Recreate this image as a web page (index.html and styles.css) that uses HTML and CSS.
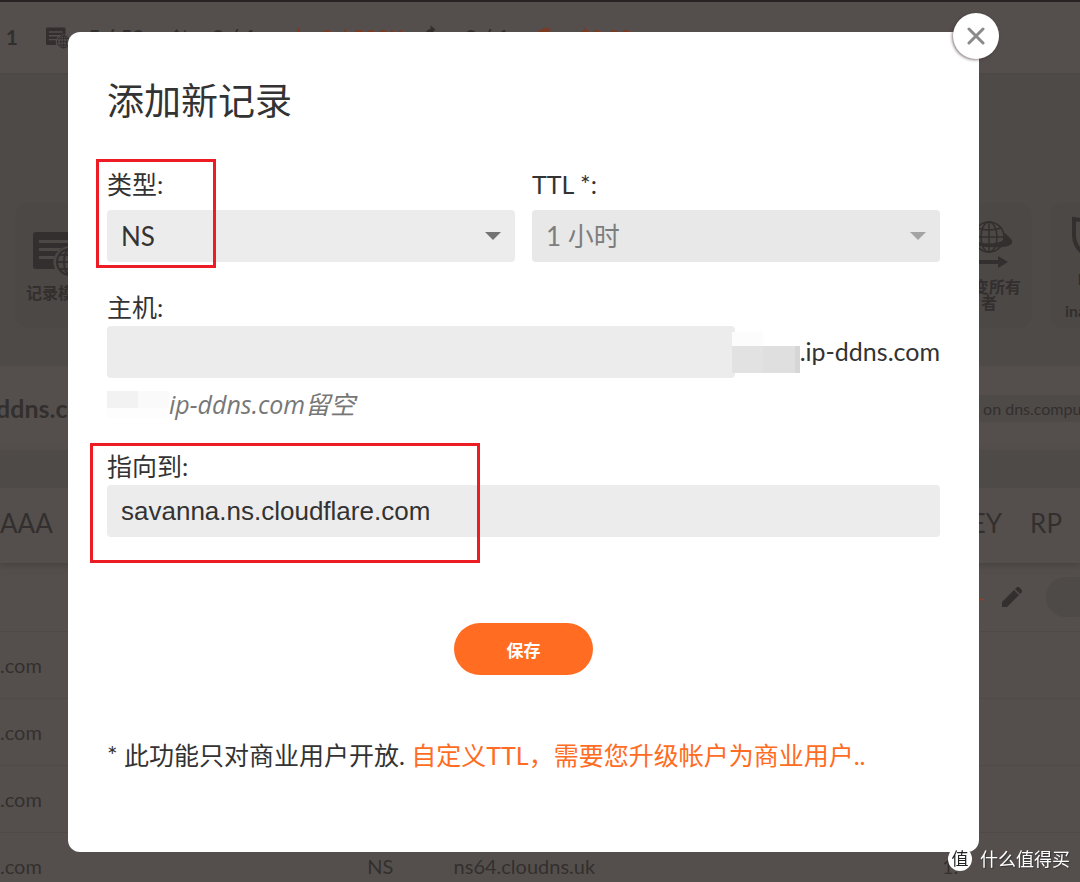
FILE: index.html
```html
<!DOCTYPE html>
<html lang="zh-CN">

<head>
    <meta charset="UTF-8">
    <meta name="viewport" content="width=device-width, initial-scale=1.0">
    <title>添加新记录</title>
    <link rel="stylesheet" href="styles.css">
</head>

<body>
    <svg class="sprite" width="0" height="0">
        <symbol id="records" viewBox="0 0 42 46">
            <path fill="currentColor" fill-rule="evenodd" d="M3 1h35a3 3 0 0 1 3 3v12a16 16 0 0 0-19 22H3a3 3 0 0 1-3-3V4a3 3 0 0 1 3-3zM6 9v3h29V9zM6 17v3h20l4-3zM6 25v3h15l1-3z" />
            <g fill="none" stroke="currentColor" stroke-width="2">
                <circle cx="37" cy="31" r="13" />
                <ellipse cx="37" cy="31" rx="6" ry="13" />
                <path d="M24 31h26M37 18v26M27 24h20M27 38h20" />
            </g>
        </symbol>
    </svg>

    <!-- DNS control panel -->
    <div class="page">
        <div class="topbar">
            <span class="stat first">/ 1</span>
            <span class="stat"><svg class="stat-icon" viewBox="0 0 42 42"><use href="#records" width="42" height="46" /></svg>5 / 50</span>
            <span class="stat"><svg class="stat-icon" viewBox="0 0 24 24"><path d="M1 12L8 4l7 8M8 5v15M18 4v16" fill="none" stroke="currentColor" stroke-width="2" /></svg>0 / 1</span>
            <span class="stat orange short"><svg class="stat-icon" viewBox="0 0 24 24"><path d="M2 1v18" stroke="currentColor" stroke-width="3" /></svg>0 / 500K</span>
            <span class="stat"><svg class="stat-icon" viewBox="0 0 24 24"><path d="M1 15C2 6 5 3 9 2V-2l6 5-6 6V6C6 6 5 10 4 15z" fill="currentColor" /></svg>0 / 1</span>
            <span class="stat orange"><svg class="stat-icon" viewBox="0 0 24 24"><path d="M1 5l11-5 1 3 3-2v16H1z" fill="currentColor" /></svg>$0.00</span>
        </div>

        <div class="tools">
            <div class="tool">
                <svg width="50" height="46" viewBox="0 0 50 46"><use href="#records" width="42" height="46" /></svg>
                <span>记录模板</span>
            </div>
            <div class="tool push">
                <svg width="50" height="50" viewBox="0 0 50 50">
                    <g fill="none" stroke="currentColor" stroke-width="1.5">
                        <circle cx="25" cy="16" r="15" />
                        <ellipse cx="25" cy="16" rx="8" ry="15" />
                        <path d="M25 1v30M10 16h30M13 7q12 4 24 0" />
                    </g>
                    <path d="M39 11c7 5 10 8 9 11-2 6-27 5-36 2l-4-5c12 5 27 4 31 0 2-2 2-4 0-8z" fill="currentColor" />
                    <path d="M4 39h30v-4l10 6-10 6v-4H4z" fill="currentColor" />
                </svg>
                <span>改变所有<br>者</span>
            </div>
            <div class="tool">
                <svg width="44" height="50" viewBox="0 0 44 50"><path d="M3 6q19 3 38 0v16c0 12-8 19-19 24C11 41 3 34 3 22z" fill="none" stroke="currentColor" stroke-width="4" /></svg>
                <span>Free<br>SSL<br>inactive</span>
            </div>
        </div>

        <div class="zone">
            <strong class="zone-name">ddns.com</strong>
            <span class="zone-check">click on dns.computer</span>
        </div>

        <div class="tabs">
            <span>AAA</span>
            <span class="push">DNSKEY</span>
            <span>RP</span>
        </div>

        <table class="records">
            <colgroup>
                <col class="col-name">
                <col class="col-type">
                <col>
                <col class="col-ttl">
            </colgroup>
            <tr>
                <td colspan="3"></td>
                <td>
                    <div class="row-actions">
                        <span class="dash">-</span>
                        <svg width="20" height="20" viewBox="0 0 20 20"><path d="M0 20v-5L12 3l5 5L5 20zM13 2l2-2q1-1 2 0l3 3q1 1 0 2l-2 2z" fill="currentColor" /></svg>
                        <span class="toggle"></span>
                    </div>
                </td>
            </tr>
            <tr>
                <td>.com</td>
                <td></td>
                <td></td>
                <td></td>
            </tr>
            <tr>
                <td>.com</td>
                <td></td>
                <td></td>
                <td></td>
            </tr>
            <tr>
                <td>.com</td>
                <td></td>
                <td></td>
                <td></td>
            </tr>
            <tr>
                <td>.com</td>
                <td>NS</td>
                <td>ns64.cloudns.uk</td>
                <td>1.</td>
            </tr>
        </table>
    </div>

    <!-- Add record dialog -->
    <div class="overlay">
        <form class="modal">
            <button type="button" class="close" aria-label="关闭">
                <svg width="18" height="18" viewBox="0 0 18 18"><path d="M2 2l14 14M16 2L2 16" stroke="#8a8a8a" stroke-width="3" stroke-linecap="round" /></svg>
            </button>
            <h1>添加新记录</h1>

            <div class="columns">
                <div class="field marked mark-type">
                    <label for="type">类型:</label>
                    <div class="select">
                        <select id="type">
                            <option>NS</option>
                        </select>
                    </div>
                </div>
                <div class="field">
                    <label for="ttl">TTL *:</label>
                    <div class="select disabled">
                        <select id="ttl" disabled>
                            <option>1 小时</option>
                        </select>
                    </div>
                </div>
            </div>

            <div class="field host">
                <label for="host">主机:</label>
                <div class="host-row">
                    <input type="text" id="host" class="input">
                    <span class="mask"></span>
                    <span class="suffix">.ip-ddns.com</span>
                </div>
                <div class="hint"><span class="hint-mask"></span><em>ip-ddns.com留空</em></div>
            </div>

            <div class="field marked mark-target">
                <label for="target">指向到:</label>
                <input type="text" id="target" class="input" value="savanna.ns.cloudflare.com">
            </div>

            <button type="button" class="save">保存</button>

            <p class="note">* 此功能只对商业用户开放. <a href="#">自定义TTL，需要您升级帐户为商业用户..</a></p>
        </form>
    </div>

    <div class="watermark"><span class="watermark-logo">值</span>什么值得买</div>
</body>

</html>
```

FILE: styles.css
```css
*,
*::after {
    margin: 0;
    padding: 0;
    box-sizing: border-box;
}

body {
    height: 100vh;
    overflow: hidden;
    background: #544f4d;
    color: #333;
    font-family: Lato, "Noto Sans CJK SC", sans-serif;
}

.sprite {
    position: absolute;
}

.sprite symbol {
    overflow: visible;
}

/* control panel behind the dialog */
.page {
    height: 100vh;
    overflow: hidden;
    color: #332f2e;
}

.push {
    margin-left: auto;
}

.topbar {
    display: grid;
    grid-template-columns: 46px 124px 127px 126px 114px 1fr;
    align-items: center;
    height: 74px;
    padding-bottom: 2px;
    border-top: 2px solid #292423;
    border-bottom: 1px solid #4b4745;
    font-size: 21px;
    font-weight: 700;
    white-space: nowrap;
}

.stat {
    display: flex;
    align-items: center;
}

.stat.first {
    justify-content: flex-end;
    padding-right: 28px;
}

.stat-icon {
    width: 20px;
    height: 20px;
    margin-right: 22px;
    overflow: visible;
}

.stat.short .stat-icon {
    margin-right: 4px;
}

.orange {
    color: #7b3a22;
}

.tools {
    display: flex;
    gap: 18px;
    height: 292px;
    padding: 129px 0 0 15px;
    margin-right: -56px;
    background: #4e4a48;
}

.tool {
    display: flex;
    flex-direction: column;
    align-items: center;
    justify-content: center;
    gap: 8px;
    width: 86px;
    height: 125px;
    border-radius: 14px;
    background: #4c4846;
    font-size: 16px;
    font-weight: 700;
    line-height: 16px;
    text-align: center;
    white-space: nowrap;
}

.zone {
    display: flex;
    align-items: center;
    justify-content: space-between;
    height: 84px;
}

.zone-name {
    margin-left: -4px;
    font-size: 25px;
}

.zone-check {
    width: 132px;
    overflow: hidden;
    background: #4e4a48;
    font-size: 16px;
    line-height: 27px;
    white-space: nowrap;
}

.tabs {
    display: flex;
    align-items: center;
    gap: 28px;
    height: 113px;
    padding: 0 18px 6px 0;
    border-top: 38px solid #4e4a48;
    box-shadow: 0 3px 6px #484442;
    font-size: 26px;
}

.records {
    width: 100%;
    table-layout: fixed;
    border-collapse: collapse;
    font-size: 20px;
}

.records td {
    height: 67px;
    border-bottom: 1px solid #4f4a48;
}

.records tr:first-child td {
    height: 68px;
}

.col-name {
    width: 34%;
}

.col-type {
    width: 8%;
}

.col-ttl {
    width: 138px;
}

.row-actions {
    display: flex;
    align-items: center;
    justify-content: flex-end;
    gap: 18px;
}

.dash {
    color: #9c3c1c;
}

.toggle {
    width: 34px;
    height: 40px;
    margin-left: 6px;
    border-radius: 20px 0 0 20px;
    background: #4e4a48;
}

/* dialog */
.overlay {
    position: fixed;
    inset: 0;
    padding: 32px 101px 30px 68px;
}

.modal {
    position: relative;
    padding: 45px 39px 79px;
    border-radius: 12px;
    background: #fff;
}

.close {
    position: absolute;
    top: -19px;
    right: -20px;
    display: flex;
    align-items: center;
    justify-content: center;
    width: 46px;
    height: 46px;
    border: 0;
    border-radius: 50%;
    background: #fff;
    box-shadow: -1px 1px 3px rgba(60, 40, 40, 0.6);
}

h1 {
    margin-bottom: 42px;
    font-size: 37px;
    font-weight: 400;
    line-height: 48px;
}

.columns {
    display: grid;
    grid-template-columns: 1fr 1fr;
    gap: 17px;
    margin-bottom: 28px;
}

.field label {
    display: block;
    margin-bottom: 2px;
    font-size: 25px;
    line-height: 34px;
}

.columns .field label {
    margin-bottom: 9px;
}

.input,
.select select {
    display: block;
    width: 100%;
    height: 52px;
    padding: 0 14px;
    border: 0;
    border-radius: 4px;
    background: #ececec;
    color: #333;
    font-family: "Liberation Sans", Arial, sans-serif;
    font-size: 26px;
}

.select {
    position: relative;
}

.select select {
    appearance: none;
    opacity: 1;
    font-family: Lato, "Noto Sans CJK SC", sans-serif;
}

.select::after {
    content: "";
    position: absolute;
    top: 22px;
    right: 14px;
    border: 8px solid transparent;
    border-top-color: #737373;
    border-bottom: 0;
    pointer-events: none;
}

.select.disabled select {
    background: #e8e8e8;
    color: #7d7d7d;
}

.select.disabled::after {
    border-top-color: #a3a3a3;
}

.host {
    margin-bottom: 27px;
}

.host-row {
    display: flex;
    align-items: center;
}

.host-row .input {
    flex: 1;
    width: auto;
    min-width: 0;
}

/* blurred-out part of the domain */
.mask {
    width: 68px;
    height: 41px;
    margin-left: -3px;
    background: linear-gradient(#fcfcfc, #fcfcfc) 0 0 / 31px 14px no-repeat,
        linear-gradient(90deg, #e2e2e2 31px, #dfdfdf 31px 63px, #d6d6d6 63px) 0 14px / 68px 27px no-repeat;
}

.suffix,
.hint,
.note {
    font-size: 25px;
    line-height: 36px;
}

.suffix {
    padding-bottom: 3px;
}

.hint {
    display: flex;
    align-items: center;
    margin-top: 8px;
    color: #777;
    font-family: "Open Sans", "Noto Sans CJK SC", sans-serif;
}

.hint-mask {
    width: 62px;
    height: 27px;
    background: linear-gradient(90deg, #f2f2f2 31px, #fafafa 31px) 0 0 / 62px 17px no-repeat, #fdfdfd;
}

/* red highlight frames */
.marked {
    position: relative;
}

.marked::after {
    content: "";
    position: absolute;
    border: 3px solid #ed1c24;
    pointer-events: none;
}

.mark-type::after {
    top: -8px;
    left: -11px;
    width: 120px;
    height: 109px;
}

.mark-target::after {
    top: -6px;
    left: -17px;
    width: 390px;
    height: 120px;
}

.save {
    display: block;
    width: 139px;
    height: 52px;
    margin: 86px auto 62px;
    border: 0;
    border-radius: 26px;
    background: #ff6c22;
    color: #fff;
    font-family: Lato, "Noto Sans CJK SC", sans-serif;
    font-size: 17px;
    font-weight: 700;
}

.note a {
    color: #ff6c22;
    text-decoration: none;
}

.watermark {
    position: fixed;
    right: 10px;
    bottom: 10px;
    display: flex;
    align-items: center;
    gap: 8px;
    color: #fff;
    font-size: 18px;
    line-height: 26px;
    text-shadow: 1px 1px 1px #333;
}

.watermark-logo {
    width: 24px;
    height: 24px;
    border-radius: 50%;
    background: #fff;
    color: #222;
    font-size: 17px;
    line-height: 24px;
    text-align: center;
    text-shadow: none;
}
```
